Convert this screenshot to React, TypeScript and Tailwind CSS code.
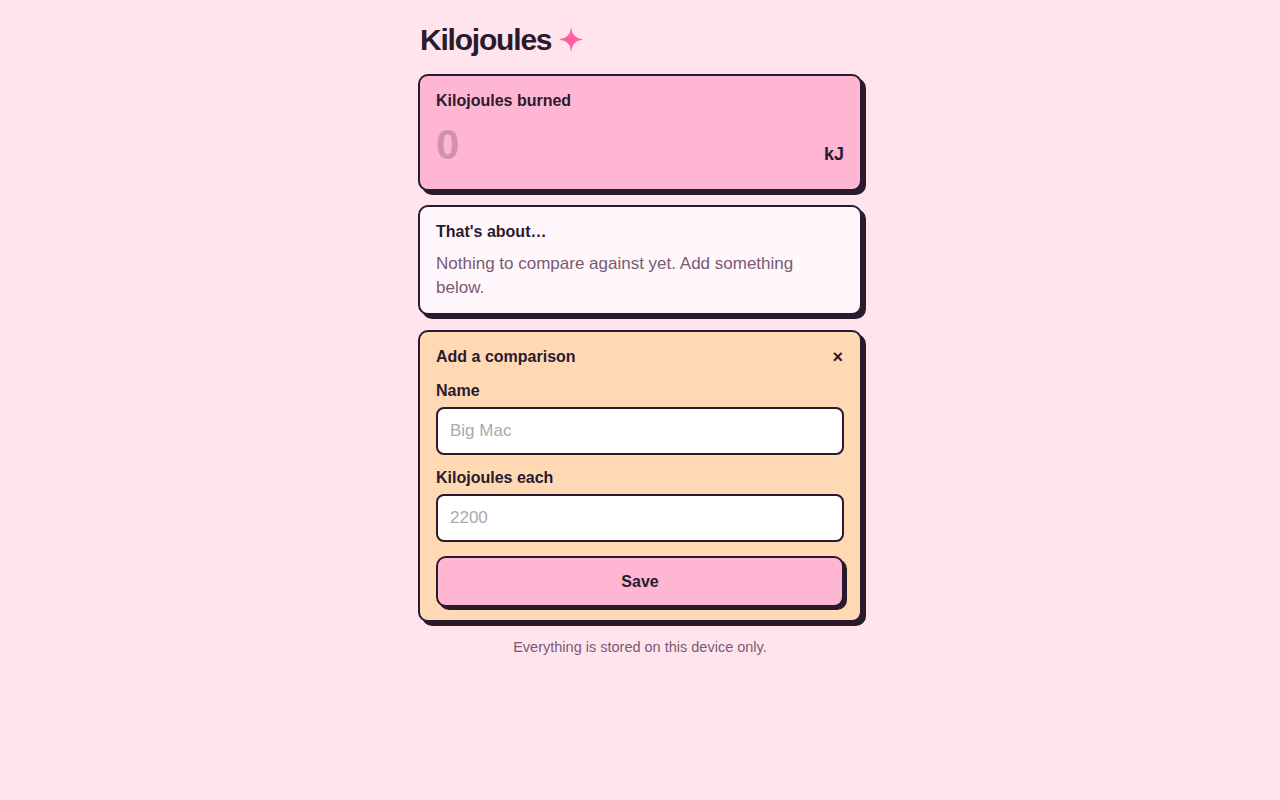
import React from "react";

export default function App() {
  const font = { fontFamily: '"Liberation Sans", Arial, sans-serif' };
  return (
    <div style={font} className="min-h-[800px] w-full bg-[#ffe4ee] text-[#2a1a2e]">
      <div className="mx-auto flex w-[444px] flex-col pt-[20px]">
        <h1 className="flex items-center gap-[8px] pl-[2px] text-[30px] font-bold leading-[40px] tracking-[-0.04em]">
          <span>Kilojoules</span>
          <span className="text-[29px] tracking-normal text-[#ff5fa2]">✦</span>
        </h1>

        <div className="mt-[14px] rounded-[10px] border-2 border-[#2a1a2e] bg-[#ffb6d2] px-[16px] pb-[20px] pt-[15px] shadow-[4px_4px_0_#2a1a2e]">
          <div className="text-[16px] font-bold leading-[20px]">Kilojoules burned</div>
          <div className="mt-[10px] flex items-baseline justify-between">
            <span className="text-[42px] font-bold leading-[48px] text-[#cf93b1]">0</span>
            <span className="relative top-[1px] text-[18px] font-bold">kJ</span>
          </div>
        </div>

        <div className="mt-[14px] rounded-[10px] border-2 border-[#2a1a2e] bg-[#fff7fb] px-[16px] pb-[13px] pt-[14px] shadow-[4px_4px_0_#2a1a2e]">
          <div className="text-[16px] font-bold leading-[22px]">That's about…</div>
          <p className="mt-[9px] text-[17px] leading-[24px] text-[#7a5a72]">
            Nothing to compare against yet. Add something below.
          </p>
        </div>

        <div className="mt-[15px] rounded-[10px] border-2 border-[#2a1a2e] bg-[#ffd8b4] px-[16px] pb-[13px] pt-[14px] shadow-[4px_4px_0_#2a1a2e]">
          <div className="flex items-center justify-between">
            <div className="text-[16px] font-bold leading-[22px]">Add a comparison</div>
            <button className="mr-[1px] text-[18px] font-bold leading-[22px] text-[#2a1a2e]">×</button>
          </div>
          <label className="mt-[13px] block text-[16px] font-bold leading-[20px]">Name</label>
          <input
            placeholder="Big Mac"
            className="mt-[6px] block h-[48px] w-full rounded-[8px] border-2 border-[#2a1a2e] bg-white px-[12px] text-[17px] outline-none placeholder:text-[#aaaaaa]"
            style={font}
          />
          <label className="mt-[13px] block text-[16px] font-bold leading-[20px]">Kilojoules each</label>
          <input
            placeholder="2200"
            className="mt-[6px] block h-[48px] w-full rounded-[8px] border-2 border-[#2a1a2e] bg-white px-[12px] text-[17px] outline-none placeholder:text-[#aaaaaa]"
            style={font}
          />
          <button
            className="mt-[14px] block h-[51px] w-full rounded-[10px] border-2 border-[#2a1a2e] bg-[#ffb6d2] text-[16px] font-bold shadow-[3px_3px_0_#2a1a2e]"
            style={font}
          >
            Save
          </button>
        </div>

        <p className="mt-[15px] text-center text-[14.5px] leading-[20px] text-[#7a5a72]">
          Everything is stored on this device only.
        </p>
      </div>
    </div>
  );
}
